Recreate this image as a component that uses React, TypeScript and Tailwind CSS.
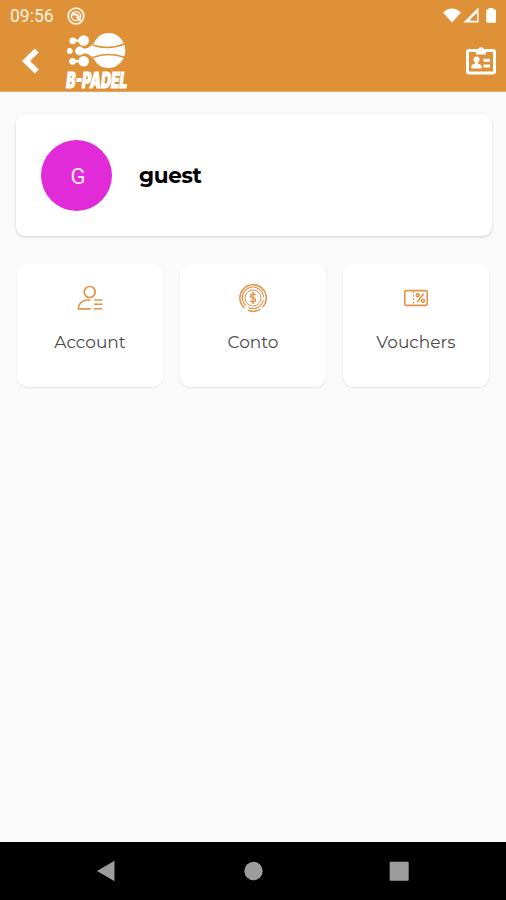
import type { ReactNode } from 'react';

interface MenuItem {
  label: string;
  icon: ReactNode;
}

function ClientLogo() {
  return (
    <svg className="h-[60px] w-[66px] overflow-visible" viewBox="64 31 66 60" aria-label="B-Padel">
      <g fill="#fff">
        <circle cx="72.8" cy="40.8" r="3.4" />
        <circle cx="83.7" cy="40.5" r="5.3" />
        <path d="M73 39.4h8v2.4h-8zM72.5 60.1h8v2.4h-8z" />
        <circle cx="69.8" cy="51" r="2.9" />
        <circle cx="79.6" cy="51" r="4.4" />
        <circle cx="72.5" cy="61.3" r="3.4" />
        <circle cx="83.7" cy="61.3" r="5.3" />
        <path d="M79 48.5H83C88 49.3 91 46 94 43C97 36.5 102 33 108.5 33A16.8 17.5 0 0 1 108.5 68C102 68 97 65 94 59C91 56 88 52.7 83 53.5H79Z" />
      </g>
      <path d="M92.5 45Q109 50.5 125 43.8M92.5 57.5Q109 51.5 125 57.5" fill="none" stroke="#df9137" strokeWidth="1.5" />
      <text
        transform="translate(65.5 88) skewX(-7)"
        fill="#fff"
        stroke="#fff"
        strokeWidth="0.9"
        textLength="61"
        lengthAdjust="spacingAndGlyphs"
        className="font-['Inter',sans-serif] text-[22px] font-black"
      >
        B-PADEL
      </text>
    </svg>
  );
}

function StatusBar() {
  return (
    <div className="flex h-[31px] items-center justify-between pr-2 pl-[10px]">
      <div className="flex items-center gap-[13px]">
        <span className="w-[44px] font-['Roboto',sans-serif] text-[17.5px] leading-5 text-[#fff3e3]">09:56</span>
        <svg className="h-[18px] w-[18px]" viewBox="0 0 18 18" fill="none" stroke="#fff3e3">
          <circle cx="9" cy="9" r="7.8" strokeWidth="1.8" />
          <circle cx="9" cy="9" r="4.6" strokeWidth="1.5" />
          <path d="M4.5 8Q9.5 5.5 12 10.500M9.500 9.500L14 14" strokeWidth="2.200" />
        </svg>
      </div>
      <svg className="h-[18px] w-[56px]" viewBox="0 0 56 18" fill="#fff">
        <path d="M1 5.5Q10 -2.500 19 5.500L10 15.500Z" />
        <path fillRule="evenodd" d="M21.300 15.500L36.500 .600V15.500ZM28.500 13.800H35V5.800L28.500 12Z" />
        <path d="M46.500 2.500V1H51.500V2.500H53Q54 2.500 54 3.500V14.500Q54 15.700 53 15.700H45.500Q44.300 15.700 44.300 14.500V3.500Q44.300 2.500 45.500 2.500Z" />
      </svg>
    </div>
  );
}

function BadgeIcon() {
  return (
    <svg className="h-[30px] w-[32px]" viewBox="0 0 32 30" fill="#fff">
      <rect x="2.500" y="4.500" width="27" height="22.500" rx="1.800" fill="none" stroke="#fff" strokeWidth="3" />
      <path d="M11 3.500H13Q13.500 1 16 1T19 3.500H21V8.500H11Z" />
      <circle cx="11.500" cy="13.500" r="3.100" />
      <path d="M10 15H13V18H10ZM6.300 22.500V20.500Q7 17.500 11.500 17.500T16.700 20.500V22.500Z" />
      <path d="M18.500 12.700H25V15.700H18.500ZM18.500 18.500H25V21.500H18.500Z" />
    </svg>
  );
}

const accountIcon = (
  <svg className="h-7 w-7" viewBox="0 0 28 28" fill="none" stroke="#e39445" strokeWidth="1.700">
    <circle cx="13.700" cy="8" r="5.500" />
    <path d="M14.500 16H11Q2.500 17 2.500 24.800H14.500" />
    <path d="M18 16H26.500M18 20.300H26.500M18 24.800H26.500" strokeWidth="1.500" />
  </svg>
);

const contoIcon = (
  <svg className="h-[30px] w-[30px]" viewBox="0 0 30 30" fill="none" stroke="#e39445" strokeWidth="1.500">
    <path d="M6.500 25A13.200 13.200 0 1 1 24.500 24.200M22.500 26A13.200 13.200 0 0 1 10 27.300" />
    <path d="M8 22.700A10.600 10.600 0 1 1 25.500 14M25.300 17A10.600 10.600 0 0 1 10.500 24.600" strokeWidth="1.200" />
    <circle cx="15" cy="15" r="8" strokeWidth="1" />
    <path d="M17.500 12.300Q17 11 15 11C11.800 11 11.800 14.500 15 15C18.500 15.500 18.200 19 15 19Q13 19 12.500 17.500M15 9V21" strokeWidth="1.400" />
  </svg>
);

const vouchersIcon = (
  <svg className="h-[18px] w-[26px]" viewBox="0 0 26 18" fill="none" stroke="#e39445" strokeWidth="1.600">
    <rect x="1.800" y="1.600" width="22.400" height="14.800" rx="2" />
    <path d="M10.500 2V16" strokeWidth="1.100" strokeDasharray="2 1.500" />
    <circle cx="14.700" cy="6.300" r="1.400" />
    <circle cx="20" cy="11.700" r="1.400" />
    <path d="M20.500 4.800L14.200 13.200" />
  </svg>
);

const menuItems: MenuItem[] = [
  { label: 'Account', icon: accountIcon },
  { label: 'Conto', icon: contoIcon },
  { label: 'Vouchers', icon: vouchersIcon },
];

export default function App() {
  return (
    <div className="flex h-[900px] w-[506px] flex-col overflow-hidden bg-[#fafafa]">
      {/* Header */}
      <header className="h-[92px] shrink-0 border-b border-[#e2a868] bg-[#df9137]">
        <StatusBar />
        <div className="flex h-[60px] items-center pr-[9px] pl-[20px]">
          <svg className="h-[28px] w-[20px]" viewBox="0 0 20 28" fill="none" stroke="#fff" strokeWidth="5.700">
            <path d="M16.800 3.500L6 14L16.800 24.500" />
          </svg>
          <div className="ml-6 flex-1">
            <ClientLogo />
          </div>
          <BadgeIcon />
        </div>
      </header>

      {/* Content */}
      <main className="flex-1 px-4 pt-[22px]">
        <section className="-mr-[2px] flex h-[122px] items-center rounded-[9px] bg-white pl-[25px] shadow-[0_1px_3px_rgba(0,0,0,0.18)]">
          <div className="flex h-[71px] w-[71px] items-center justify-center rounded-full bg-[#e22bd8] pt-[2px] pl-[3px] font-['Roboto',sans-serif] text-[22px] text-[#ffe9ff]">
            G
          </div>
          <p className="ml-[27px] font-['Montserrat','Inter',sans-serif] text-[21.5px] leading-7 font-bold tracking-[-0.3px] text-black">
            guest
          </p>
        </section>

        <div className="mt-7 grid grid-cols-3 gap-[17px] px-[1px]">
          {menuItems.map(({ label, icon }) => (
            <div
              key={label}
              className="flex h-[123px] flex-col items-center rounded-[11px] bg-white pt-[18px] shadow-[0_1px_2px_rgba(0,0,0,0.09)]"
            >
              <div className="flex h-8 items-center">{icon}</div>
              <span className="mt-4 font-['Montserrat','Inter',sans-serif] text-[17px] leading-6 text-[#4a4a4a]">
                {label}
              </span>
            </div>
          ))}
        </div>
      </main>

      {/* Android navigation */}
      <nav className="flex h-[58px] shrink-0 justify-center bg-black pt-[17px]">
        <svg className="h-6 w-[320px]" viewBox="93 859 320 24" fill="#9c9c9c">
          <path d="M97 871L114.500 860.700V881.300Z" />
          <circle cx="253.500" cy="871" r="9.200" />
          <rect x="389.700" y="861.700" width="19" height="19" rx="1" />
        </svg>
      </nav>
    </div>
  );
}
